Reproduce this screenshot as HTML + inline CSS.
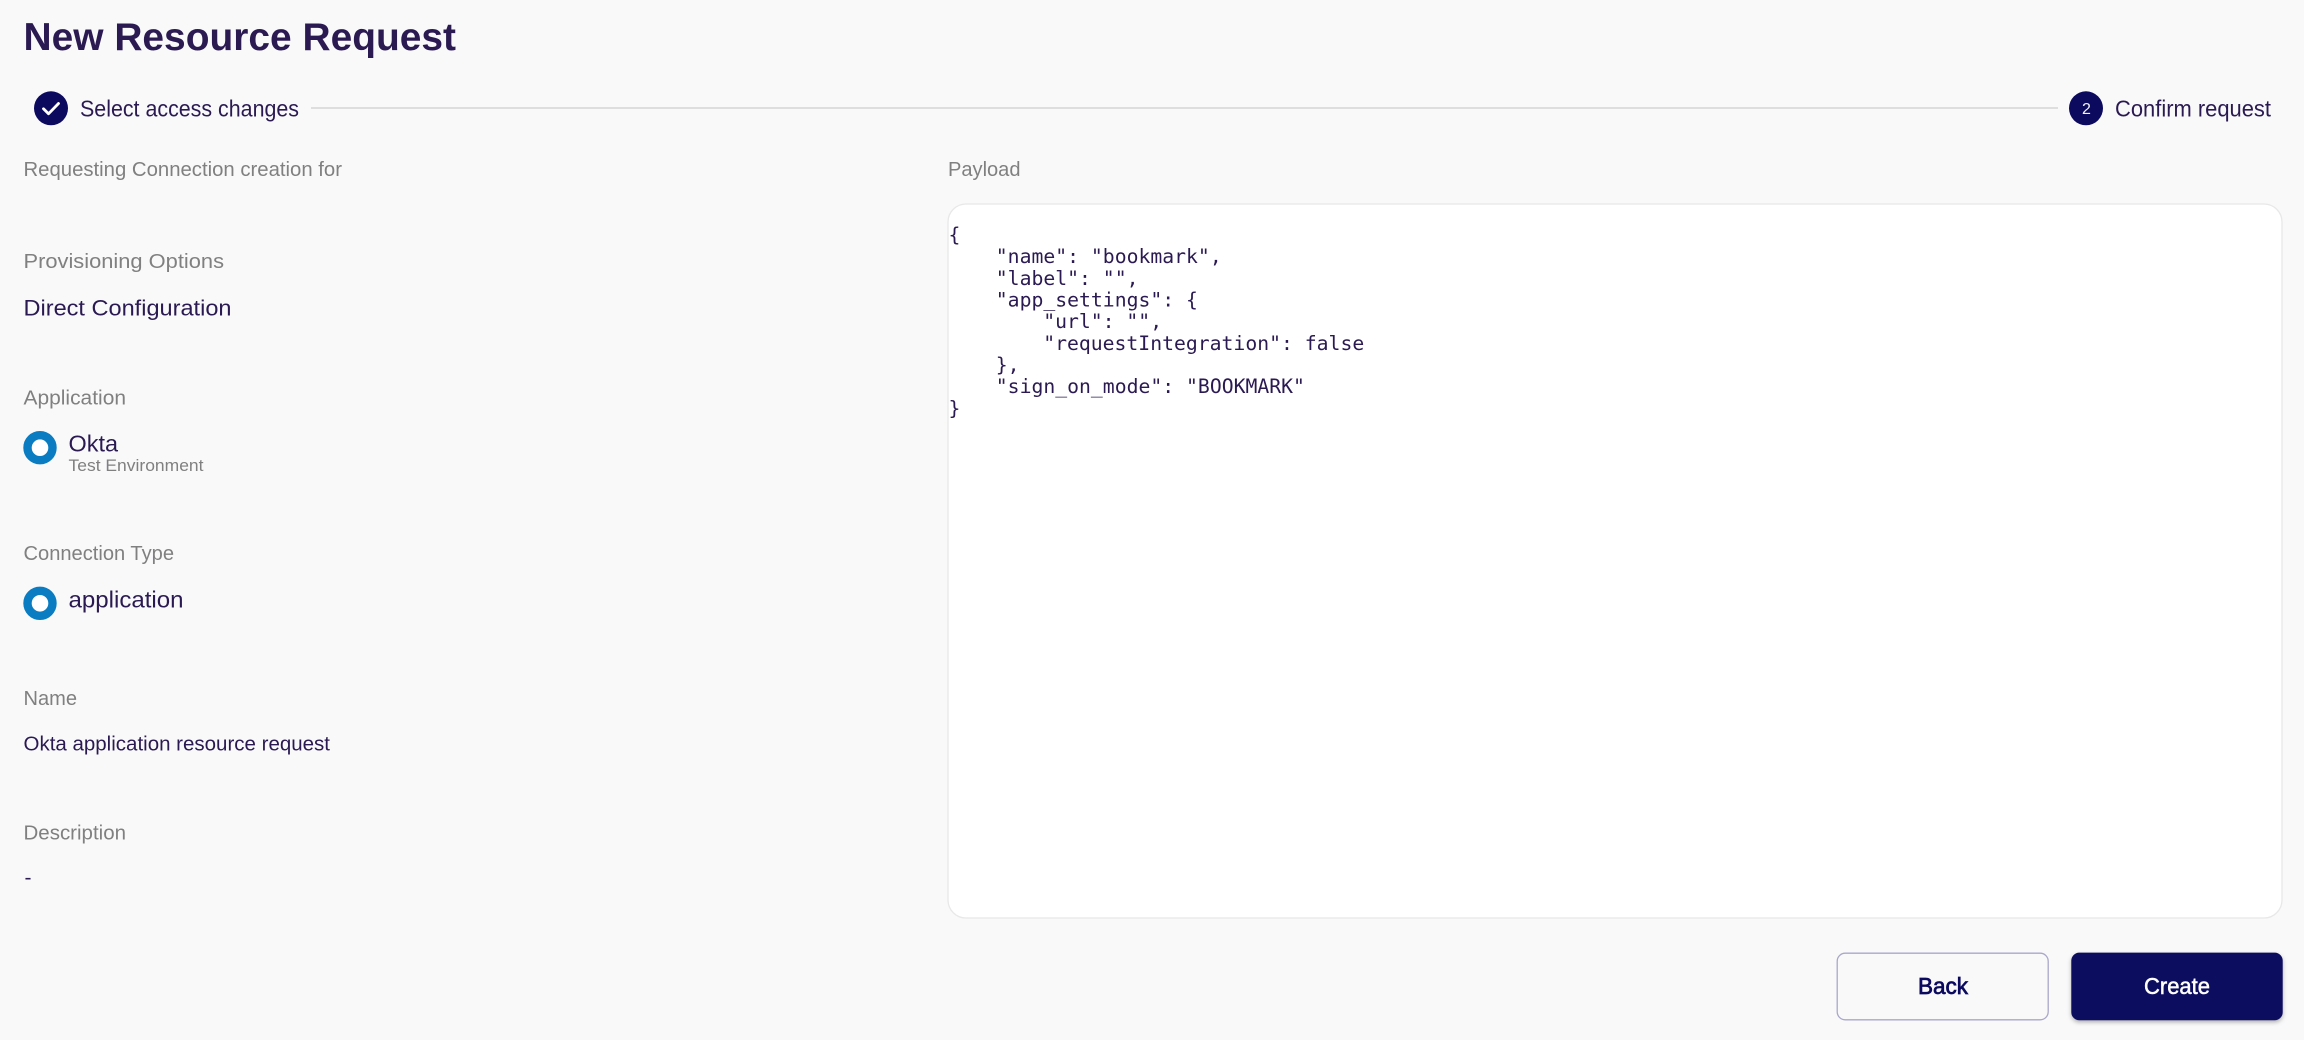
<!DOCTYPE html>
<html lang="en">
<head>
<meta charset="utf-8">
<title>New Resource Request</title>
<style>
html,body{margin:0;padding:0;background:#f9f9fa;width:2304px;height:1040px;overflow:hidden}
svg{display:block;position:absolute;left:0;top:0;filter:blur(.35px)}
text{font-family:"Liberation Sans",sans-serif}
.l{fill:#808080;font-size:20.5px}
.v{fill:#2b1a52}
.c{font-family:"DejaVu Sans Mono","Liberation Mono",monospace;font-size:19.75px;fill:#2b1a52}
</style>
</head>
<body>
<svg width="2304" height="1040" viewBox="0 0 2304 1040" xmlns="http://www.w3.org/2000/svg">
<defs>
<filter id="sh" x="-10%" y="-20%" width="120%" height="150%"><feDropShadow dx="0" dy="2" stdDeviation="2" flood-color="#000" flood-opacity=".3"/></filter>
</defs>
<rect width="2304" height="1040" fill="#f9f9fa"/>

<text x="23.5" y="50" font-size="39" font-weight="700" fill="#2b1a52" textLength="432.5" lengthAdjust="spacingAndGlyphs">New Resource Request</text>

<circle cx="51" cy="108.3" r="17" fill="#0c0a5f"/>
<path d="M43.5 108.8l5 5 10-10.3" fill="none" stroke="#fff" stroke-width="2.8" stroke-linecap="round" stroke-linejoin="round"/>
<text class="v" x="80" y="116.7" font-size="23" textLength="219" lengthAdjust="spacingAndGlyphs">Select access changes</text>
<rect x="311" y="107.2" width="1747" height="1.6" fill="#d8d8d8"/>
<circle cx="2086" cy="108.3" r="17" fill="#0c0a5f"/>
<text x="2086.5" y="114" font-size="16" fill="#f2f2f8" text-anchor="middle">2</text>
<text class="v" x="2115" y="116.7" font-size="23" textLength="156" lengthAdjust="spacingAndGlyphs">Confirm request</text>

<text class="l" x="23.5" y="176" textLength="318.5" lengthAdjust="spacingAndGlyphs">Requesting Connection creation for</text>
<text class="l" x="23.5" y="268" font-size="21" textLength="200.5" lengthAdjust="spacingAndGlyphs">Provisioning Options</text>
<text class="v" x="23.5" y="315.3" font-size="22.5" textLength="208" lengthAdjust="spacingAndGlyphs">Direct Configuration</text>

<text class="l" x="23.5" y="404.7" textLength="102.5" lengthAdjust="spacingAndGlyphs">Application</text>
<circle cx="40" cy="447.7" r="12.5" fill="#fff" stroke="#0a7cc1" stroke-width="8.4"/>
<text class="v" x="68.5" y="451.7" font-size="23" textLength="49.5" lengthAdjust="spacingAndGlyphs">Okta</text>
<text x="68.5" y="471" font-size="17" fill="#808080" textLength="135" lengthAdjust="spacingAndGlyphs">Test Environment</text>

<text class="l" x="23.5" y="560" textLength="150.5" lengthAdjust="spacingAndGlyphs">Connection Type</text>
<circle cx="40" cy="603.3" r="12.5" fill="#fff" stroke="#0a7cc1" stroke-width="8.4"/>
<text class="v" x="68.5" y="607.4" font-size="23" textLength="115" lengthAdjust="spacingAndGlyphs">application</text>

<text class="l" x="23.5" y="705" textLength="53.5" lengthAdjust="spacingAndGlyphs">Name</text>
<text class="v" x="23.5" y="750.7" font-size="20.5" textLength="306.5" lengthAdjust="spacingAndGlyphs">Okta application resource request</text>

<text class="l" x="23.5" y="839.3" textLength="102.5" lengthAdjust="spacingAndGlyphs">Description</text>
<text class="v" x="24.5" y="884" font-size="20.5" textLength="7" lengthAdjust="spacingAndGlyphs">-</text>

<text class="l" x="948" y="176" textLength="72.5" lengthAdjust="spacingAndGlyphs">Payload</text>
<rect x="948" y="204" width="1334" height="714" rx="18" ry="18" fill="#fff" stroke="#e8e8e8" stroke-width="1.3"/>

<text class="c" x="948.5" y="241.5">{</text>
<text class="c" x="995.8" y="263.2">"name": "bookmark",</text>
<text class="c" x="995.8" y="284.9">"label": "",</text>
<text class="c" x="995.8" y="306.5">"app_settings": {</text>
<text class="c" x="1043.2" y="328.2">"url": "",</text>
<text class="c" x="1043.2" y="349.9">"requestIntegration": false</text>
<text class="c" x="995.8" y="371.5">},</text>
<text class="c" x="995.8" y="393.2">"sign_on_mode": "BOOKMARK"</text>
<text class="c" x="948.5" y="414.9">}</text>

<rect x="1837.2" y="953.2" width="211" height="66.6" rx="8" ry="8" fill="#f9f9fa" stroke="#a9a8c9" stroke-width="1.3"/>
<text x="1918" y="994" font-size="23" fill="#0c0a5f" stroke="#0c0a5f" stroke-width=".75" textLength="50" lengthAdjust="spacingAndGlyphs">Back</text>

<rect x="2071.3" y="952.6" width="211.4" height="67.6" rx="8" ry="8" fill="#0c0a5f" filter="url(#sh)"/>
<text x="2144" y="994" font-size="23" fill="#fff" stroke="#fff" stroke-width=".5" textLength="66" lengthAdjust="spacingAndGlyphs">Create</text>
</svg>
</body>
</html>
